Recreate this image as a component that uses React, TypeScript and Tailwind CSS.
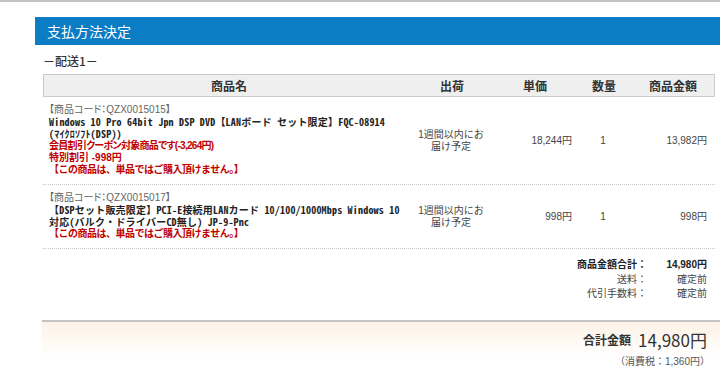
import React from "react";

const cols = "grid grid-cols-[370px_76px_88px_52px_86px]";
const SANS = "font-['Liberation_Sans','Noto_Sans_CJK_JP',sans-serif]";

function Row({
  code,
  name,
  red,
  price,
  qty,
  amount,
}: {
  code: string;
  name: string;
  red: { text: string; cls: string }[];
  price: string;
  qty: string;
  amount: string;
}) {
  return (
    <div className={`${cols} border-b border-dotted border-[#c8c8c8]`}>
      <div className="pl-[6px] pt-[7px] pb-[8px] leading-[12px] whitespace-nowrap">
        <div className={`${SANS} text-[10px] text-[#666] [font-feature-settings:'palt']`}>{code}</div>
        <div className="whitespace-pre-line text-[10px] font-bold text-[#222] tracking-[0.2px] font-['Noto_Sans_Mono_CJK_JP','Noto_Sans_CJK_JP',monospace]">
          {name}
        </div>
        {red.map((l, i) => (
          <div key={i} className={`${SANS} text-[10px] font-bold text-[#c00000] ${l.cls}`}>
            {l.text}
          </div>
        ))}
      </div>
      <div className={`${SANS} flex flex-col items-center justify-center text-[10px] leading-[11.5px] text-[#444]`}>
        <div>1週間以内にお</div>
        <div>届け予定</div>
      </div>
      <div className={`${SANS} flex items-center justify-end pr-[5px] text-[10px] text-[#444]`}>{price}</div>
      <div className={`${SANS} flex items-center justify-center text-[10px] text-[#444]`}>{qty}</div>
      <div className={`${SANS} flex items-center justify-end pr-[8px] text-[10px] text-[#444]`}>{amount}</div>
    </div>
  );
}

const NOTICE = {
  text: "【この商品は、単品ではご購入頂けません。】",
  cls: "tracking-[-0.5px]",
};

export default function App() {
  return (
    <div className="w-[720px] h-[384px] overflow-hidden bg-white text-[#333] font-['Noto_Sans_CJK_JP','Liberation_Sans',sans-serif]">
      <div className="h-[2px] bg-[#c2c2c2]" />
      <div className="mt-[15px] ml-[35px] h-[28px] bg-[#0a7dc5] flex items-center pl-[12px] text-white text-[14px]">
        支払方法決定
      </div>
      <div className="pl-[43px] pr-[5px]">
        <div className="h-[29px] flex items-center pt-[3px] text-[12px] font-medium text-[#333]">－配送1－</div>
        <div className={`${cols} h-[23px] items-center bg-[#efefef] border border-[#cacaca] text-[12px] font-bold text-[#333]`}>
          <div className="text-center">商品名</div>
          <div className="text-center">出荷</div>
          <div className="text-center pl-[2px]">単価</div>
          <div className="text-center">数量</div>
          <div className="text-center">商品金額</div>
        </div>
        <Row
          code="【商品コード：QZX0015015】"
          name={"Windows 10 Pro 64bit Jpn DSP DVD【LANボード セット限定】FQC-08914\n(ﾏｲｸﾛｿﾌﾄ(DSP))"}
          red={[
            { text: "会員割引クーポン対象商品です(-3,264円)", cls: "tracking-[-0.7px] [font-feature-settings:'palt']" },
            { text: "特別割引 -998円", cls: "[font-feature-settings:'palt']" },
            NOTICE,
          ]}
          price="18,244円"
          qty="1"
          amount="13,982円"
        />
        <Row
          code="【商品コード：QZX0015017】"
          name={"【DSPセット販売限定】PCI-E接続用LANカード 10/100/1000Mbps Windows 10\n対応(バルク・ドライバーCD無し) JP-9-Pnc"}
          red={[NOTICE]}
          price="998円"
          qty="1"
          amount="998円"
        />
        <div className="flex justify-end pr-[8px] pt-[9px]">
          <div className={`${SANS} grid grid-cols-[auto_52px] gap-x-[8px] text-[10px] leading-[14.5px] text-[#444]`}>
            <div className="text-right font-bold text-[#222]">商品金額合計：</div>
            <div className="text-right font-bold text-[#222]">14,980円</div>
            <div className="text-right">送料：</div>
            <div className="text-right">確定前</div>
            <div className="text-right">代引手数料：</div>
            <div className="text-right">確定前</div>
          </div>
        </div>
      </div>
      <div className="mt-[18px] ml-[42px] border-t-2 border-[#c4c4c4] h-[36px] pt-[2px] bg-linear-to-b from-[#fdf2e5] to-white flex items-center justify-end pr-[13px]">
        <span className="text-[12px] font-bold text-[#333] mr-[7px]">合計金額</span>
        <span className="text-[17px] text-[#333]">14,980円</span>
      </div>
      <div className={`${SANS} text-right pr-[10px] text-[10px] leading-[12px] text-[#555]`}>（消費税：1,360円）</div>
    </div>
  );
}
